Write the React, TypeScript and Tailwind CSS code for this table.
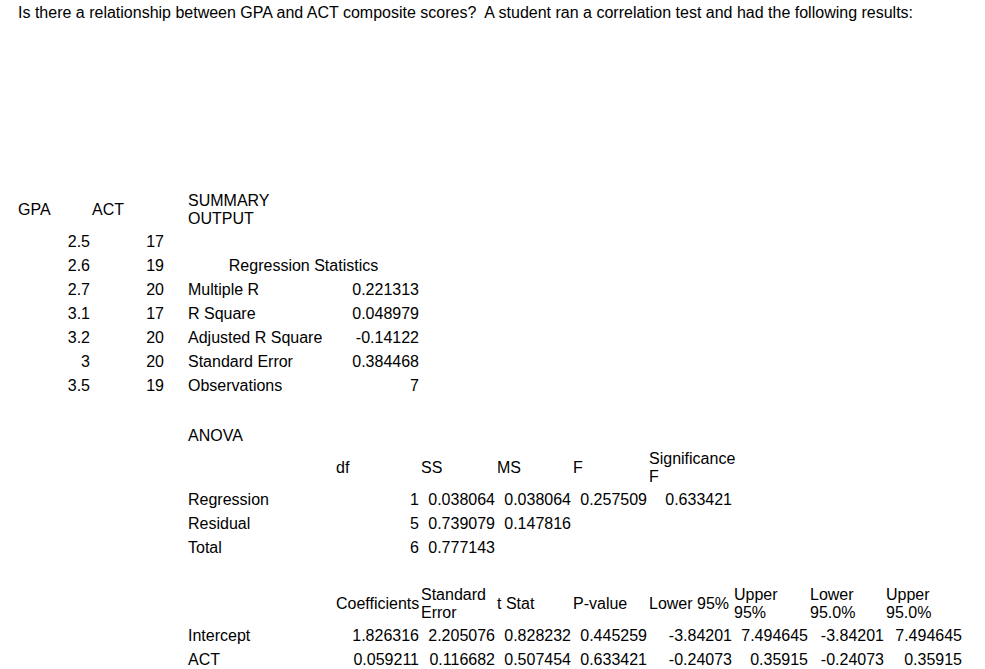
import React from "react";

const COLS =
  "grid grid-cols-[74px_74px_22px_148px_85px_76px_76px_76px_85px_76px_76px_78px] items-center";

type Cell = { t?: React.ReactNode; a?: "l" | "r" | "c"; span?: number };

function Row({ cells, h = "n" }: { cells: Cell[]; h?: "n" | "t" | "g" }) {
  const hc = h === "t" ? "h-[40px]" : h === "g" ? "h-[26px]" : "h-[24px]";
  return (
    <div className={`${COLS} ${hc}`}>
      {cells.map((c, i) => (
        <div
          key={i}
          className={`px-[1px] whitespace-nowrap leading-[18px] ${
            c.a === "r" ? "text-right" : c.a === "c" ? "text-center" : "text-left"
          } ${c.span === 2 ? "col-span-2" : ""}`}
        >
          {c.t}
        </div>
      ))}
    </div>
  );
}

const E: Cell = {};
const L = (t: React.ReactNode): Cell => ({ t, a: "l" });
const R = (t: React.ReactNode): Cell => ({ t, a: "r" });

const gpa = [
  ["2.5", "17"],
  ["2.6", "19"],
  ["2.7", "20"],
  ["3.1", "17"],
  ["3.2", "20"],
  ["3", "20"],
  ["3.5", "19"],
];

export default function App() {
  const stats: Cell[][] = [
    [E, E],
    [{ t: "Regression Statistics", a: "c", span: 2 }],
    [L("Multiple R"), R("0.221313")],
    [L("R Square"), R("0.048979")],
    [L("Adjusted R Square"), R("-0.14122")],
    [L("Standard Error"), R("0.384468")],
    [L("Observations"), R("7")],
  ];

  return (
    <div className="min-h-[669px] w-[985px] bg-white text-black font-['Liberation_Sans',Arial,sans-serif] text-[16px]">
      <p className="pt-[4px] pl-[18px] leading-[18px] whitespace-nowrap">
        Is there a relationship between GPA and ACT composite scores?{"\u00a0"} A student ran a correlation test and had the following results:
      </p>
      <div className="mt-[168px] ml-[17px]">
        <Row
          h="t"
          cells={[
            L("GPA"),
            L("ACT"),
            E,
            L(
              <>
                SUMMARY
                <br />
                OUTPUT
              </>
            ),
          ]}
        />
        {gpa.map((g, i) => (
          <Row key={i} cells={[R(g[0]), R(g[1]), E, ...stats[i]]} />
        ))}
        <Row h="g" cells={[E]} />
        <Row cells={[E, E, E, L("ANOVA")]} />
        <Row
          h="t"
          cells={[
            E,
            E,
            E,
            E,
            L("df"),
            L("SS"),
            L("MS"),
            L("F"),
            L(
              <>
                Significance
                <br />F
              </>
            ),
          ]}
        />
        <Row
          cells={[
            E,
            E,
            E,
            L("Regression"),
            R("1"),
            R("0.038064"),
            R("0.038064"),
            R("0.257509"),
            R("0.633421"),
          ]}
        />
        <Row cells={[E, E, E, L("Residual"), R("5"), R("0.739079"), R("0.147816")]} />
        <Row cells={[E, E, E, L("Total"), R("6"), R("0.777143")]} />
        <Row cells={[E]} />
        <Row
          h="t"
          cells={[
            E,
            E,
            E,
            E,
            L("Coefficients"),
            L(
              <>
                Standard
                <br />
                Error
              </>
            ),
            L("t Stat"),
            L("P-value"),
            L("Lower 95%"),
            L(
              <>
                Upper
                <br />
                95%
              </>
            ),
            L(
              <>
                Lower
                <br />
                95.0%
              </>
            ),
            L(
              <>
                Upper
                <br />
                95.0%
              </>
            ),
          ]}
        />
        <Row
          cells={[
            E,
            E,
            E,
            L("Intercept"),
            R("1.826316"),
            R("2.205076"),
            R("0.828232"),
            R("0.445259"),
            R("-3.84201"),
            R("7.494645"),
            R("-3.84201"),
            R("7.494645"),
          ]}
        />
        <Row
          cells={[
            E,
            E,
            E,
            L("ACT"),
            R("0.059211"),
            R("0.116682"),
            R("0.507454"),
            R("0.633421"),
            R("-0.24073"),
            R("0.35915"),
            R("-0.24073"),
            R("0.35915"),
          ]}
        />
      </div>
    </div>
  );
}
